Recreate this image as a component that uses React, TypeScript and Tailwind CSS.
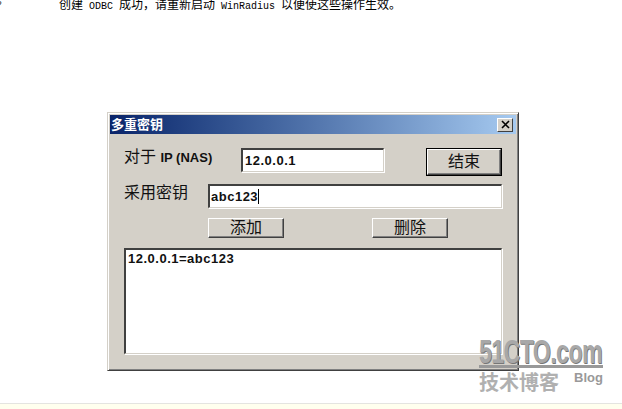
export default function App() {
  const sunken = "border-t-2 border-l-2 border-t-[#404040] border-l-[#404040] border-b border-r border-b-[#d4d0c8] border-r-[#d4d0c8] shadow-[1px_1px_0_#fff] bg-white";
  const raised = "flex items-center justify-center border border-t-white border-l-white border-r-[#404040] border-b-[#404040] shadow-[inset_-1px_-1px_0_#808080] bg-[#d4d0c8] text-[#111] text-[16px]";
  const mono = { fontFamily: '"Liberation Mono","Noto Sans CJK SC",monospace' };
  return (
    <div className="relative w-[622px] h-[409px] bg-white overflow-hidden" style={{ fontFamily: '"Liberation Sans","Noto Sans CJK SC",sans-serif' }}>
      <div className="absolute left-[-4px] top-0 h-3 text-[10px] leading-3 text-[#333]" style={mono}>?</div>
      <div className="absolute left-[59px] top-0 h-3 text-[12px] leading-3 text-black whitespace-nowrap" style={mono}>
        创建<span className="text-[10px]"> ODBC </span>成功{"\uFF0C"}请重新启动<span className="text-[10px]"> WinRadius </span>以便使这些操作生效。
      </div>

      <div className="absolute left-[107px] top-[112px] w-[412px] h-[259px] flex flex-col bg-[#d4d0c8] border border-t-[#d4d0c8] border-l-[#d4d0c8] border-r-[#404040] border-b-[#404040] shadow-[inset_1px_1px_0_#fff,inset_-1px_-1px_0_#808080] p-[2px]">
        <div className="h-[19px] flex items-center justify-between bg-gradient-to-r from-[#0a246a] to-[#a6caf0] pl-[1px] pr-[3px] shrink-0">
          <span className="text-white text-[13px] font-bold leading-none">多重密钥</span>
          <span className="w-4 h-[14px] flex items-center justify-center bg-[#d4d0c8] border border-t-white border-l-white border-r-[#404040] border-b-[#404040]">
            <svg width="9" height="9" viewBox="0 0 9 9"><path d="M1 1L8 8M8 1L1 8" stroke="#000" strokeWidth="1.6" /></svg>
          </span>
        </div>
        <div className="flex flex-col px-[14px] pt-[14px]">
          <div className="flex items-start h-[36px]">
            <span className="w-[117px] text-[#111] text-[16px] leading-[18px] whitespace-nowrap">对于 <span className="text-[13px] font-bold">IP (NAS)</span></span>
            <div className={`w-[143px] h-6 flex items-center pl-[2px] text-[13px] tracking-[0.5px] font-bold text-[#111] ${sunken}`}>12.0.0.1</div>
            <div className="w-[42px]" />
            <div className="w-[76px] h-[28px] border border-black flex">
              <div className={`flex-1 ${raised}`}>结束</div>
            </div>
          </div>
          <div className="flex items-start h-[34px]">
            <span className="w-[84px] text-[#111] text-[16px] leading-[18px] whitespace-nowrap">采用密钥</span>
            <div className={`w-[294px] h-6 flex items-center pl-[1px] text-[13px] tracking-[0.5px] font-bold text-[#111] ${sunken}`}>abc123<span className="w-px h-[15px] bg-black" /></div>
          </div>
          <div className="flex items-start h-[30px] pl-[84px]">
            <div className={`w-[76px] h-5 ${raised}`}>添加</div>
            <div className="w-[88px]" />
            <div className={`w-[76px] h-5 ${raised}`}>删除</div>
          </div>
          <div className={`w-[378px] h-[106px] pl-[2px] pt-[1px] text-[13px] tracking-[0.5px] leading-4 font-bold text-[#111] ${sunken}`}>12.0.0.1=abc123</div>
        </div>
      </div>

      <div className="absolute left-[479px] top-[339px] w-[124px] flex flex-col text-[#a8a8a8]">
        <div className="h-[26px] text-[33px] leading-[26px] font-bold tracking-[-0.8px] whitespace-nowrap origin-left scale-x-[0.7] [text-shadow:1px_1px_0_#777]">51CTO.com</div>
        <div className="h-[3px] bg-[#999]" />
        <div className="flex items-start justify-between mt-[4px]">
          <span className="text-[20px] leading-[22px] font-bold text-[#b0b0b0]">技术博客</span>
          <span className="text-[13px] leading-[12px] font-bold text-[#999]">Blog</span>
        </div>
      </div>

      <div className="absolute left-0 right-0 bottom-0 h-[6px] bg-[#ffffee] border-t border-[#e4e4e0]" />
    </div>
  );
}
